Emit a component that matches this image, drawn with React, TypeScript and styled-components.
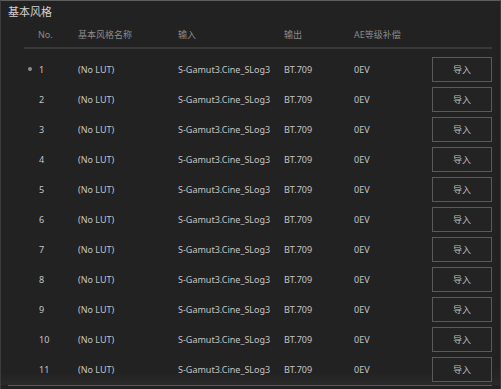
import React from 'react';
import styled, { createGlobalStyle } from 'styled-components';

const GlobalStyle = createGlobalStyle`
  html, body {
    margin: 0;
    padding: 0;
    background: #1c1c1c;
  }
  body {
    font-family: "Noto Sans", "Noto Sans CJK SC", sans-serif;
  }
`

const Panel = styled.div`
  width: 501px;
  height: 389px;
  box-sizing: border-box;
  background: #222222;
  border-top: 1px solid #5e5e5e;
  border-left: 1px solid #3c3c3c;
  border-right: 1px solid #3c3c3c;
  display: flex;
  flex-direction: column;
  overflow: hidden;
`

const Title = styled.div`
  height: 20px;
  padding-left: 7px;
  display: flex;
  align-items: center;
  font-size: 11px;
  color: #d0d0d0;
`

const Scroller = styled.div`
  height: 364px;
  overflow: hidden;
  padding-left: 23px;
  padding-right: 8px;
  background: linear-gradient(to bottom, #222222 0, #222222 352px, #2a2a2a 364px);
`

const Grid = styled.div`
  display: grid;
  grid-template-columns: 54px 100px 106px 70px 78px 60px;
`

const HeaderRow = styled(Grid)`
  height: 26px;
  align-items: center;
  border-bottom: 2px solid #393939;
  margin-bottom: 5px;
  font-size: 9px;
  color: #8a8a8a;
`

const Row = styled(Grid)`
  height: 30px;
  align-items: center;
  font-size: 9px;
  color: #c4c4c4;
`

const NoCell = styled.div`
  display: flex;
  align-items: center;
  padding-left: 4px;
`

const Dot = styled.span<{ $on: boolean }>`
  width: 4px;
  height: 4px;
  border-radius: 50%;
  background: #8c8c8c;
  margin-right: 7px;
  visibility: ${p => (p.$on ? 'visible' : 'hidden')};
`

const HeadNo = styled.div`
  padding-left: 14px;
`

const ImportButton = styled.button`
  width: 60px;
  height: 25px;
  box-sizing: border-box;
  background: #232323;
  border: 1px solid #5a5a5a;
  color: #bdbdbd;
  font-family: "Noto Sans CJK SC", sans-serif;
  font-size: 9px;
  padding: 0;
  cursor: pointer;
`

const Footer = styled.div`
  flex: 1;
  margin-left: 7px;
  margin-right: 8px;
  border-top: 1px solid #5a5a5a;
`

const rows = Array.from({ length: 11 }, (_, i) => i + 1);

export default function App() {
  return (
    <>
      <GlobalStyle />
      <Panel>
        <Title>基本风格</Title>
        <Scroller>
          <HeaderRow>
            <HeadNo>No.</HeadNo>
            <div>基本风格名称</div>
            <div>输入</div>
            <div>输出</div>
            <div>AE等级补偿</div>
            <div />
          </HeaderRow>
          {rows.map(n => (
            <Row key={n}>
              <NoCell>
                <Dot $on={n === 1} />
                {n}
              </NoCell>
              <div>(No LUT)</div>
              <div>S-Gamut3.Cine_SLog3</div>
              <div>BT.709</div>
              <div>0EV</div>
              <ImportButton>导入</ImportButton>
            </Row>
          ))}
        </Scroller>
        <Footer />
      </Panel>
    </>
  )
}
